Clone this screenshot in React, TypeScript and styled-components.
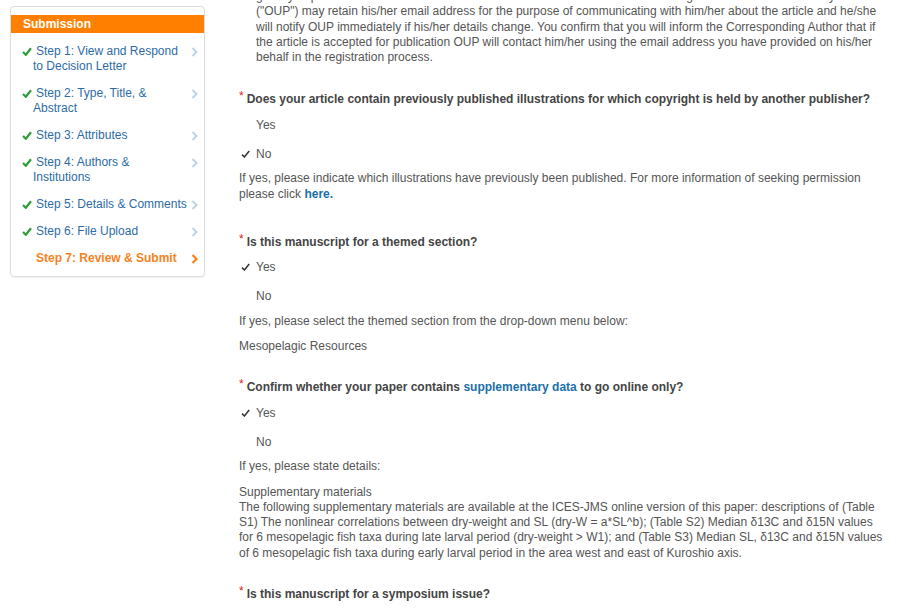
import React from "react";
import styled, { createGlobalStyle } from "styled-components";

const GlobalStyle = createGlobalStyle`
  html, body {
    margin: 0;
    padding: 0;
    background: #fff;
  }
  body {
    font-family: "Liberation Sans", Arial, sans-serif;
    font-size: 12px;
    color: #555;
  }
`;

const Page = styled.div`
  display: flex;
  align-items: flex-start;
  width: 902px;
  height: 608px;
  overflow: hidden;
`;

const Sidebar = styled.nav`
  flex: 0 0 193px;
  width: 193px;
  min-width: 0;
  margin: 6px 0 0 10px;
  padding: 8px 0 4px;
  border: 1px solid #dcdcdc;
  border-radius: 4px;
  box-shadow: 0 1px 2px rgba(0, 0, 0, 0.06);
`;

const SidebarHeader = styled.div`
  height: 18px;
  line-height: 18px;
  padding-left: 12px;
  background: #ff7f00;
  color: #fff;
  font-weight: bold;
`;

const StepList = styled.ul`
  list-style: none;
  margin: 0;
  padding: 5px 0 0;
`;

const StepItem = styled.li<{ $current?: boolean }>`
  display: flex;
  align-items: flex-start;
  padding: 6px 6px 6px 0;
  line-height: 15px;
  color: ${(p) => (p.$current ? "#f5821f" : "#2c6ca5")};
  font-weight: ${(p) => (p.$current ? "bold" : "normal")};
`;

const StepLabel = styled.span<{ $nowrap?: boolean }>`
  flex: 1;
  min-width: 0;
  padding: 0 6px 0 22px;
  text-indent: -11px;
  white-space: ${(p) => (p.$nowrap ? "nowrap" : "normal")};
`;

const Chevron = styled.svg`
  flex: 0 0 auto;
  margin-top: 3px;
`;

const DoneMark = styled.svg<{ $hidden?: boolean }>`
  margin-right: 4px;
  vertical-align: -1px;
  visibility: ${(p) => (p.$hidden ? "hidden" : "visible")};
`;

const Main = styled.main`
  flex: 0 0 645px;
  margin: -11px 0 0 34px;
`;

const Intro = styled.p`
  margin: 0 0 23px;
  padding-left: 17px;
  line-height: 15.25px;
`;

const Section = styled.section<{ $extra?: number }>`
  margin-bottom: ${(p) => 22 + (p.$extra || 0)}px;
`;

const Question = styled.div`
  line-height: 16px;
  margin-bottom: 3px;
  font-weight: bold;
  color: #444;
`;

const Required = styled.span`
  color: #d2232a;
  font-weight: normal;
  vertical-align: 3px;
  margin-right: 3px;
`;

const Link = styled.a`
  color: #1a6fa9;
  font-weight: bold;
  text-decoration: none;
`;

const OptionRow = styled.div`
  display: flex;
  align-items: center;
  height: 29px;
`;

const OptionMark = styled.span`
  display: flex;
  width: 17px;
  padding-left: 2px;
  box-sizing: border-box;
`;

const Note = styled.p<{ $gap?: number }>`
  margin: ${(p) => p.$gap ?? 10}px 0 0;
  line-height: 15.25px;
`;

function Check({ hidden }: { hidden?: boolean }) {
  return (
    <DoneMark $hidden={hidden} width="10" height="9" viewBox="0 0 10 9">
      <path d="M1 5 L3.8 7.8 L9 1.2" fill="none" stroke="#2f9e3a" strokeWidth="2.2" />
    </DoneMark>
  );
}

function Arrow({ current }: { current?: boolean }) {
  return (
    <Chevron width="7" height="10" viewBox="0 0 7 10">
      <path
        d="M1.5 1 L5.5 5 L1.5 9"
        fill="none"
        stroke={current ? "#f5821f" : "#b8d2e6"}
        strokeWidth={current ? 2.2 : 1.8}
      />
    </Chevron>
  );
}

function Tick() {
  return (
    <svg width="9" height="8" viewBox="0 0 9 8">
      <path d="M1 4.6 L3.4 7 L8.2 1" fill="none" stroke="#333" strokeWidth="1.5" />
    </svg>
  );
}

const steps = [
  { label: "Step 1: View and Respond to Decision Letter" },
  { label: "Step 2: Type, Title, & Abstract" },
  { label: "Step 3: Attributes" },
  { label: "Step 4: Authors & Institutions" },
  { label: "Step 5: Details & Comments", nowrap: true },
  { label: "Step 6: File Upload" },
];

function Option({ label, selected }: { label: string; selected?: boolean }) {
  return (
    <OptionRow>
      <OptionMark>{selected && <Tick />}</OptionMark>
      {label}
    </OptionRow>
  );
}

export default function App() {
  return (
    <>
      <GlobalStyle />
      <Page>
        <Sidebar>
          <SidebarHeader>Submission</SidebarHeader>
          <StepList>
            {steps.map((s) => (
              <StepItem key={s.label}>
                <StepLabel $nowrap={s.nowrap}>
                  <Check />
                  {s.label}
                </StepLabel>
                <Arrow />
              </StepItem>
            ))}
            <StepItem $current>
              <StepLabel>
                <Check hidden />
                Step 7: Review &amp; Submit
              </StepLabel>
              <Arrow current />
            </StepItem>
          </StepList>
        </Sidebar>

        <Main>
          <Intro>
            given you permission to submit his/her details on his/her behalf and that he/she agrees that Oxford University Press
            ("OUP") may retain his/her email address for the purpose of communicating with him/her about the article and he/she
            will notify OUP immediately if his/her details change. You confirm that you will inform the Corresponding Author that if
            the article is accepted for publication OUP will contact him/her using the email address you have provided on his/her
            behalf in the registration process.
          </Intro>

          <Section $extra={7}>
            <Question>
              <Required>*</Required>
              Does your article contain previously published illustrations for which copyright is held by another publisher?
            </Question>
            <Option label="Yes" />
            <Option label="No" selected />
            <Note $gap={3}>
              If yes, please indicate which illustrations have previously been published. For more information of seeking permission
              please click <Link href="#">here.</Link>
            </Note>
          </Section>

          <Section>
            <Question>
              <Required>*</Required>
              Is this manuscript for a themed section?
            </Question>
            <Option label="Yes" selected />
            <Option label="No" />
            <Note $gap={3}>If yes, please select the themed section from the drop-down menu below:</Note>
            <Note>Mesopelagic Resources</Note>
          </Section>

          <Section>
            <Question>
              <Required>*</Required>
              Confirm whether your paper contains <Link href="#">supplementary data</Link> to go online only?
            </Question>
            <Option label="Yes" selected />
            <Option label="No" />
            <Note $gap={3}>If yes, please state details:</Note>
            <Note>
              Supplementary materials
              <br />
              The following supplementary materials are available at the ICES-JMS online version of this paper: descriptions of (Table
              S1) The nonlinear correlations between dry-weight and SL (dry-W = a*SL^b); (Table S2) Median δ13C and δ15N values
              for 6 mesopelagic fish taxa during late larval period (dry-weight &gt; W1); and (Table S3) Median SL, δ13C and δ15N values
              of 6 mesopelagic fish taxa during early larval period in the area west and east of Kuroshio axis.
            </Note>
          </Section>

          <Section>
            <Question>
              <Required>*</Required>
              Is this manuscript for a symposium issue?
            </Question>
          </Section>
        </Main>
      </Page>
    </>
  );
}
